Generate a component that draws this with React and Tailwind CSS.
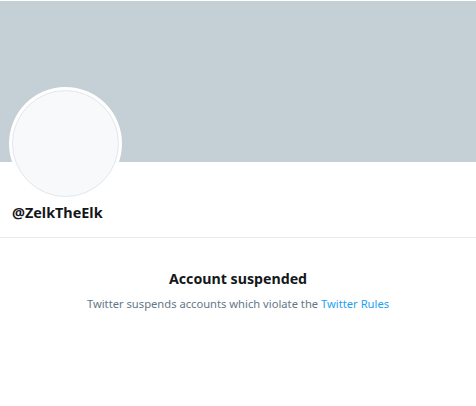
import React from 'react';

const App = () => {
  return (
    <div className="w-[476px] h-[406px] bg-white overflow-hidden" style={{ fontFamily: '"Noto Sans", "Open Sans", Arial, sans-serif' }}>
      {/* banner */}
      <div className="mt-px h-[161px] bg-[#c4cfd6]" />

      {/* avatar + handle */}
      <div className="px-[9px]">
        <div className="-mt-[75px] w-[113px] h-[113px] rounded-full bg-white p-[3px]">
          <div className="w-full h-full rounded-full bg-[#f7f9fa] border border-[#e1e8ed]" />
        </div>
        <div className="mt-[3px] pl-[3px] text-[14.4px] font-bold leading-5 text-[#14171a]">@ZelkTheElk</div>
      </div>

      <div className="mt-[14px] border-b border-[#e6ecf0]" />

      {/* suspended notice */}
      <div className="pt-[31px] text-center">
        <h2 className="text-[14.2px] font-bold leading-5 text-[#14171a]">Account suspended</h2>
        <p className="mt-[7px] text-[11.2px] leading-4 text-[#657786]">
          Twitter suspends accounts which violate the{' '}
          <a href="#" className="text-[#1da1f2]">Twitter Rules</a>
        </p>
      </div>
    </div>
  );
};

export default App;
